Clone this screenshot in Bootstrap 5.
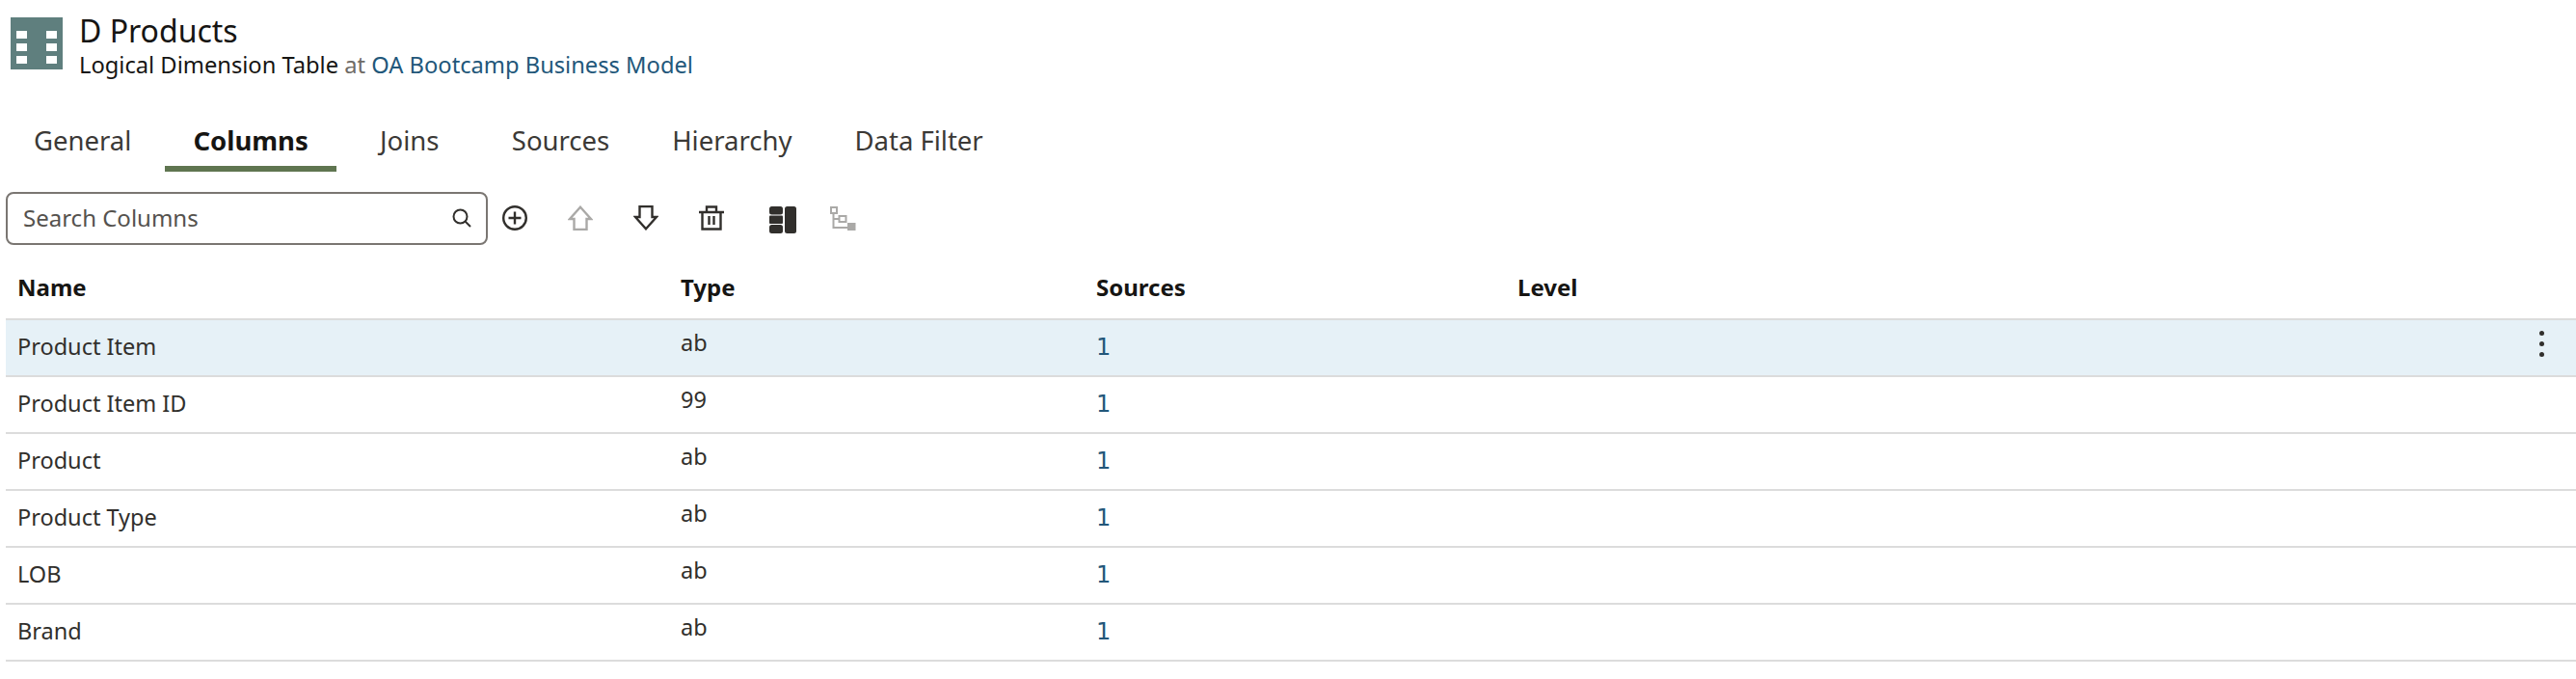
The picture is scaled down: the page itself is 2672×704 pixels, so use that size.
<!doctype html>
<html lang="en">
<head>
<meta charset="utf-8">
<title>D Products</title>
<link href="https://cdn.jsdelivr.net/npm/bootstrap@5.3.0/dist/css/bootstrap.min.css" rel="stylesheet">
<style>
html,body{background:#fff;overflow:hidden}
body{font-family:"Noto Sans","Open Sans",sans-serif;color:#161513;height:704px}
.hdr{padding:18px 0 0 11px;height:92px}
.hdr-ico{width:54px;height:54px;flex:none;margin-right:17px}
.ttl{font-size:32px;line-height:32px;margin:-2px 0 0;font-weight:400}
.sub{font-size:23.7px;line-height:32px;margin-top:3px}
.sub .at{color:#6f6b66}
.sub a{color:#22577a;text-decoration:none}
.tabs-x{height:106px;margin:0;padding-left:5px;gap:5px}
.tabs-x .nav-link{font-size:27.5px;line-height:40px;color:#3b3936;padding:34px 30px 0;height:86px;position:relative;text-align:center;border:0;border-radius:0}
.tabs-x .nav-link.active{color:#161513;font-weight:700;padding:34px 29px 0}
.tabs-x .nav-link.active::after{content:"";position:absolute;left:0;right:0;top:80px;height:6px;background:#5f7550}
.tab-wide{min-width:142px}
.search-wrap{width:500px;height:55px;margin-left:6px;border:2px solid #7a7672;border-radius:8px;padding:0 14px 0 16px}
.search-wrap input{border:0;outline:0;flex:1;min-width:0;font-size:24px;color:#161513;padding:0;background:transparent}
.search-wrap input::placeholder{color:#55524e;opacity:1}
.tool{padding:0;border:0;background:transparent;display:flex;justify-content:center;align-items:center;height:56px;flex:none}
.tool-a{width:56px}.tool-b{width:80px}.tool-c{width:68px}.tool-d{width:56px}
.tbar{height:56px}
.grid-x{table-layout:fixed;width:2666px;margin:0 0 0 6px;font-size:23.5px;color:#312f2c}
.grid-x th,.grid-x td{padding:0 12px;border-bottom:2px solid #dcdcdc;vertical-align:middle;background:transparent;box-shadow:none;color:inherit}
.grid-x th{height:77px;font-size:24px;font-weight:700;color:#161513;padding-top:12px}
.grid-x td{height:59px;padding-bottom:2px}
.grid-x tr.sel td{background:#e6f1f7}
.src-link{color:#22577a;text-decoration:none;font-family:"DejaVu Sans",sans-serif;font-size:24px}
.ty{position:relative;top:-4px;display:inline-block}
.kebab{display:flex;flex-direction:column;gap:6px;align-items:center;width:10px;margin-left:auto;margin-right:19px;position:relative;top:-3px}
.kebab i{display:block;width:5px;height:5px;border-radius:50%;background:#312f2c}
</style>
</head>
<body>
<header class="hdr d-flex align-items-start">
  <svg class="hdr-ico" viewBox="0 0 54 54"><rect width="54" height="54" fill="#5f7f7e"/><g fill="#fff"><rect x="6" y="14" width="11" height="8"/><rect x="37" y="14" width="11" height="8"/><rect x="6" y="27" width="11" height="8"/><rect x="37" y="27" width="11" height="8"/><rect x="6" y="40" width="11" height="8"/><rect x="37" y="40" width="11" height="8"/></g></svg>
  <div>
    <h1 class="ttl">D Products</h1>
    <div class="sub">Logical Dimension Table <span class="at">at</span> <a href="#">OA Bootcamp Business Model</a></div>
  </div>
</header>
<ul class="nav tabs-x">
  <li class="nav-item"><a class="nav-link" href="#">General</a></li>
  <li class="nav-item"><a class="nav-link active" href="#">Columns</a></li>
  <li class="nav-item tab-wide"><a class="nav-link" href="#">Joins</a></li>
  <li class="nav-item"><a class="nav-link" href="#">Sources</a></li>
  <li class="nav-item"><a class="nav-link" href="#">Hierarchy</a></li>
  <li class="nav-item"><a class="nav-link" href="#">Data Filter</a></li>
</ul>
<div class="d-flex align-items-center tbar">
  <div class="search-wrap d-flex align-items-center">
    <input type="text" placeholder="Search Columns" aria-label="Search Columns">
    <svg width="22" height="22" viewBox="0 0 22 22" fill="none" stroke="#312f2c" stroke-width="2"><circle cx="9.5" cy="9.5" r="7"/><path d="M14.5 14.5 20 20"/></svg>
  </div>
  <button class="tool tool-a" aria-label="Add"><svg width="26" height="26" viewBox="0 0 26 26" fill="none" stroke="#312f2c" stroke-width="2.4"><circle cx="13" cy="13" r="11.8"/><path d="M13 6.5v13M6.5 13h13"/></svg></button>
  <button class="tool tool-b" aria-label="Move up"><svg width="26" height="26" viewBox="0 0 26 26" fill="none" stroke="#aaa9a7" stroke-width="2.4"><path d="M13 1.7 24 14h-4.500v11h-13V14H2Z"/></svg></button>
  <button class="tool tool-a" aria-label="Move down"><svg width="26" height="26" viewBox="0 0 26 26" fill="none" stroke="#312f2c" stroke-width="2.4"><path d="M13 24.300 24 12h-4.500V1h-13v11H2Z"/></svg></button>
  <button class="tool tool-b" aria-label="Delete"><svg width="26" height="26" viewBox="0 0 26 26" fill="none" stroke="#312f2c" stroke-width="2.4"><path d="M0 7h26M8 7V1.500h10V7M3.500 7v17.500h19V7M10.500 11v9M15.500 11v9"/></svg></button>
  <button class="tool tool-c" aria-label="Columns"><svg class="mt-1" width="28" height="28" viewBox="0 0 28 28" fill="#312f2c"><rect x="0" y="0" width="14" height="8.500" rx="2.500"/><rect x="0" y="9.500" width="14" height="8.500" rx="1"/><rect x="0" y="19" width="14" height="9" rx="2.500"/><rect x="16" y="0" width="12" height="28" rx="2.500"/></svg></button>
  <button class="tool tool-d" aria-label="Hierarchy"><svg width="27" height="25" viewBox="0 0 27 25" fill="none" stroke="#aaa9a7" stroke-width="2"><rect x="1" y="1" width="6" height="6"/><rect x="9.500" y="10" width="7" height="6"/><path d="M3.500 7v15h15M3.500 13h6"/><rect x="18" y="17" width="8.500" height="8" fill="#aaa9a7" stroke="none"/></svg></button>
</div>
<table class="table grid-x mb-0">
  <colgroup><col style="width:688px"><col style="width:431px"><col style="width:437px"><col></colgroup>
  <thead><tr><th>Name</th><th>Type</th><th>Sources</th><th>Level</th></tr></thead>
  <tbody>
    <tr class="sel"><td>Product Item</td><td><span class="ty">ab</span></td><td><a class="src-link" href="#">1</a></td><td><div class="kebab"><i></i><i></i><i></i></div></td></tr>
    <tr><td>Product Item ID</td><td><span class="ty">99</span></td><td><a class="src-link" href="#">1</a></td><td></td></tr>
    <tr><td>Product</td><td><span class="ty">ab</span></td><td><a class="src-link" href="#">1</a></td><td></td></tr>
    <tr><td>Product Type</td><td><span class="ty">ab</span></td><td><a class="src-link" href="#">1</a></td><td></td></tr>
    <tr><td>LOB</td><td><span class="ty">ab</span></td><td><a class="src-link" href="#">1</a></td><td></td></tr>
    <tr><td>Brand</td><td><span class="ty">ab</span></td><td><a class="src-link" href="#">1</a></td><td></td></tr>
  </tbody>
</table>
<script src="https://cdn.jsdelivr.net/npm/bootstrap@5.3.0/dist/js/bootstrap.bundle.min.js"></script>
</body>
</html>
